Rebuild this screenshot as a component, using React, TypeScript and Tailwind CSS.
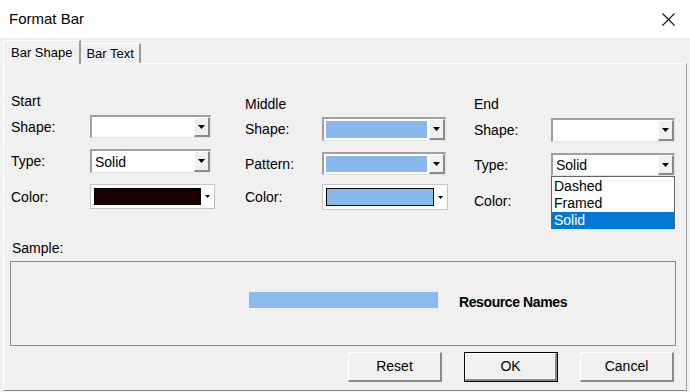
import React from 'react';

function Arrow() {
    return (
        <svg width="7" height="4" viewBox="0 0 7 4">
            <polygon points="0,0 7,0 3.5,4" fill="#000" />
        </svg>
    );
}

function Combo({ size, text, fill }: { size: string; text?: string; fill?: boolean }) {
    return (
        <div className={`${size} flex bg-white border-t-2 border-l-2 border-r border-b border-t-[#a0a0a0] border-l-[#a0a0a0] border-r-[#e3e3e3] border-b-[#e3e3e3]`}>
            <div className="flex-1 p-[2px] flex items-center min-w-0">
                {fill ? (
                    <div className="w-full h-full bg-[#88b8ec]" />
                ) : (
                    <span className="pl-[1px] text-[14px] leading-none">{text}</span>
                )}
            </div>
            <div className="w-[16px] flex items-center justify-center bg-[#f0f0f0] border-t border-l border-t-white border-l-white border-r-2 border-b-2 border-r-[#8a8a8a] border-b-[#8a8a8a]">
                <Arrow />
            </div>
        </div>
    );
}

function ColorCombo({ size, swatch }: { size: string; swatch: string }) {
    return (
        <div className={`${size} flex items-stretch bg-white border border-[#c4c4c4] pl-[3px] py-[3px]`}>
            <div className={`flex-1 border border-black ${swatch}`} />
            <div className="w-[13px] flex items-center justify-center">
                <svg width="5" height="3" viewBox="0 0 5 3">
                    <polygon points="0,0 5,0 2.5,3" fill="#000" />
                </svg>
            </div>
        </div>
    );
}

function Row({ label, gap, labelW, children }: { label: string; gap: string; labelW: string; children: React.ReactNode }) {
    return (
        <div className={`flex items-center ${gap}`}>
            <span className={`${labelW} text-[14px] leading-[16px]`}>{label}</span>
            {children}
        </div>
    );
}

function Button({ label, primary }: { label: string; primary?: boolean }) {
    return (
        <button
            className={`h-[30px] flex items-center justify-center bg-[#f0f0f0] text-[14px] ${
                primary ? 'w-[94px] border border-black' : 'w-[94px]'
            }`}
        >
            <span className="w-full h-full flex items-center justify-center border-t border-l border-t-white border-l-white border-r-2 border-b-2 border-r-[#8a8a8a] border-b-[#8a8a8a]">
                {label}
            </span>
        </button>
    );
}

export default function App() {
    return (
        <div className="w-[690px] h-[392px] bg-[#f0f0f0] flex flex-col text-black font-['Liberation_Sans',Arial,sans-serif] overflow-hidden">
            {/* Title bar */}
            <div className="h-[38px] bg-white flex items-center justify-between pl-[9px] pr-[15px]">
                <span className="text-[15px]">Format Bar</span>
                <svg width="13" height="13" viewBox="0 0 13 13">
                    <path d="M0.5 0.5 L12.5 12.5 M12.5 0.5 L0.5 12.5" stroke="#111" strokeWidth="1.1" />
                </svg>
            </div>

            {/* Tabs */}
            <div className="h-[25px] flex items-end pl-[3px]">
                <div className="relative z-10 -mb-px h-[24px] px-[7px] flex items-center bg-[#f0f0f0] border-t border-l border-t-white border-l-white border-r-2 border-r-[#9a9a9a] text-[13px]">
                    Bar Shape
                </div>
                <div className="h-[20px] px-[5px] flex items-center border-t border-t-white border-r-2 border-r-[#9a9a9a] text-[13px]">
                    Bar Text
                </div>
            </div>

            {/* Panel */}
            <div className="ml-[3px] w-[684px] h-[328px] flex flex-col border-t border-l border-t-white border-l-white border-r border-b border-r-[#a0a0a0] border-b-[#8a8a8a]">
                <div className="h-[176px] grid grid-cols-[241px_229px_1fr] items-start">
                    {/* Start */}
                    <div className="pl-[7px] flex flex-col">
                        <span className="mt-[29px] text-[14px] leading-[16px]">Start</span>
                        <Row label="Shape:" gap="mt-[6px]" labelW="w-[79px]">
                            <Combo size="w-[121px] h-[23px]" />
                        </Row>
                        <Row label="Type:" gap="mt-[11px]" labelW="w-[79px]">
                            <Combo size="w-[121px] h-[24px]" text="Solid" />
                        </Row>
                        <Row label="Color:" gap="mt-[11px]" labelW="w-[79px]">
                            <ColorCombo size="w-[125px] h-[25px]" swatch="bg-[#1c0000]" />
                        </Row>
                    </div>

                    {/* Middle */}
                    <div className="flex flex-col">
                        <span className="mt-[32px] text-[14px] leading-[16px]">Middle</span>
                        <Row label="Shape:" gap="mt-[5px]" labelW="w-[77px]">
                            <Combo size="w-[124px] h-[24px]" fill />
                        </Row>
                        <Row label="Pattern:" gap="mt-[11px]" labelW="w-[77px]">
                            <Combo size="w-[124px] h-[23px]" fill />
                        </Row>
                        <Row label="Color:" gap="mt-[9px]" labelW="w-[77px]">
                            <ColorCombo size="w-[126px] h-[26px]" swatch="bg-[#88b8ec]" />
                        </Row>
                    </div>

                    {/* End */}
                    <div className="flex flex-col">
                        <span className="mt-[32px] text-[14px] leading-[16px]">End</span>
                        <Row label="Shape:" gap="mt-[6px]" labelW="w-[77px]">
                            <Combo size="w-[124px] h-[24px]" />
                        </Row>
                        <Row label="Type:" gap="mt-[11px]" labelW="w-[77px]">
                            <div className="relative">
                                <Combo size="w-[124px] h-[23px]" text="Solid" />
                                <ul className="absolute z-20 top-full left-0 w-[124px] h-[53px] bg-white border border-[#646464] text-[14px] leading-[16px] pt-[1px]">
                                    <li className="pl-[2px] h-[17px]">Dashed</li>
                                    <li className="pl-[2px] h-[17px]">Framed</li>
                                    <li className="pl-[2px] h-[17px] bg-[#0078d7] text-white">Solid</li>
                                </ul>
                            </div>
                        </Row>
                        <Row label="Color:" gap="mt-[9px]" labelW="w-[77px] pt-[6px]">
                            <ColorCombo size="w-[124px] h-[26px]" swatch="bg-white" />
                        </Row>
                    </div>
                </div>

                {/* Sample */}
                <span className="pl-[8px] h-[16px] text-[14px] leading-[16px]">Sample:</span>
                <div className="ml-[6px] mt-[5px] w-[666px] h-[85px] border border-[#8a8a8a] flex items-start pt-[30px] pl-[238px]">
                    <div className="w-[189px] h-[16px] bg-[#8ab9ec]" />
                    <span className="ml-[21px] text-[14px] leading-[16px] font-bold tracking-[-0.4px] mt-[2px]">Resource Names</span>
                </div>

                {/* Buttons */}
                <div className="mt-[6px] flex justify-end gap-[22px] pr-[12px]">
                    <Button label="Reset" />
                    <Button label="OK" primary />
                    <Button label="Cancel" />
                </div>
            </div>
        </div>
    );
}
